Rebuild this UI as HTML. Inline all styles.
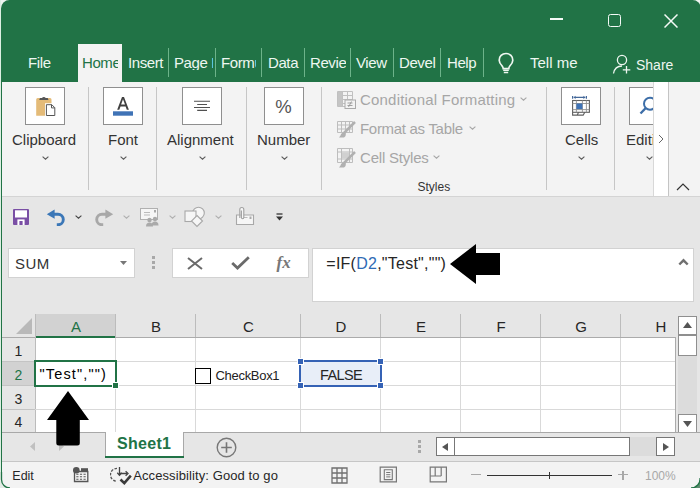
<!DOCTYPE html><html><head><meta charset="utf-8"><style>
html,body{margin:0;padding:0;width:700px;height:488px;overflow:hidden;background:#eef4f0}
body{position:relative;font-family:"Liberation Sans",sans-serif}
div{position:absolute}
.t{white-space:nowrap;line-height:1}
</style></head><body>
<div style="left:1px;top:0px;width:700px;height:82px;background:#217346;border-radius:8.5px 8.5px 0 0"></div>
<div style="left:0px;top:0px;width:1px;height:488px;background:#dcefe2"></div>
<div style="left:550px;top:18.3px;width:13px;height:1.5px;background:#f4faf6"></div>
<div style="left:607.5px;top:13.8px;width:13px;height:13px;border:1.5px solid #f4faf6;border-radius:2.5px;box-sizing:border-box"></div>
<svg style="position:absolute;left:664px;top:13.5px;" width="14" height="14" viewBox="0 0 14 14"><path d="M0.5 0.5L13.5 13.5M13.5 0.5L0.5 13.5" stroke="#f4faf6" stroke-width="1.5"/></svg>
<div style="left:78px;top:44px;width:44px;height:38px;background:#f3f3f3"></div>
<div class="t" style="left:28px;top:54.50px;font-size:15px;letter-spacing:-0.4px;color:#eef7f1;">File</div>
<div class="t" style="left:82px;top:54.50px;font-size:15px;letter-spacing:-0.4px;color:#217346;width:35.5px;overflow:hidden;">Home</div>
<div class="t" style="left:128px;top:54.50px;font-size:15px;letter-spacing:-0.4px;color:#eef7f1;">Insert</div>
<div class="t" style="left:174px;top:54.50px;font-size:15px;letter-spacing:-0.4px;color:#eef7f1;width:38.5px;overflow:hidden;">Page L</div>
<div class="t" style="left:221px;top:54.50px;font-size:15px;letter-spacing:-0.4px;color:#eef7f1;width:35px;overflow:hidden;">Formula</div>
<div class="t" style="left:268px;top:54.50px;font-size:15px;letter-spacing:-0.4px;color:#eef7f1;">Data</div>
<div class="t" style="left:310px;top:54.50px;font-size:15px;letter-spacing:-0.4px;color:#eef7f1;width:35.5px;overflow:hidden;">Review</div>
<div class="t" style="left:356px;top:54.50px;font-size:15px;letter-spacing:-0.4px;color:#eef7f1;">View</div>
<div class="t" style="left:399px;top:54.50px;font-size:15px;letter-spacing:-0.4px;color:#eef7f1;">Devel</div>
<div class="t" style="left:447px;top:54.50px;font-size:15px;letter-spacing:-0.4px;color:#eef7f1;">Help</div>
<div style="left:168px;top:48px;width:1px;height:29px;background:#6db38a"></div>
<div style="left:215px;top:48px;width:1px;height:29px;background:#6db38a"></div>
<div style="left:261px;top:48px;width:1px;height:29px;background:#6db38a"></div>
<div style="left:304px;top:48px;width:1px;height:29px;background:#6db38a"></div>
<div style="left:350px;top:48px;width:1px;height:29px;background:#6db38a"></div>
<div style="left:393px;top:48px;width:1px;height:29px;background:#6db38a"></div>
<div style="left:440px;top:48px;width:1px;height:29px;background:#6db38a"></div>
<div style="left:483px;top:48px;width:1px;height:29px;background:#6db38a"></div>
<svg style="position:absolute;left:497px;top:52px;" width="18" height="22" viewBox="0 0 18 22"><path d="M9 1.5C5 1.5 2.2 4.5 2.2 8.2c0 2.6 1.5 4.2 2.8 5.6.8.9 1.2 1.8 1.2 2.8h5.6c0-1 .4-1.9 1.2-2.8 1.3-1.4 2.8-3 2.8-5.6C15.8 4.5 13 1.5 9 1.5z" fill="none" stroke="#eef7f1" stroke-width="1.7"/><path d="M6.2 18.3h5.6M6.8 20.6h4.4" stroke="#eef7f1" stroke-width="1.5"/></svg>
<div class="t" style="left:530px;top:55.30px;font-size:15px;color:#eef7f1;">Tell me</div>
<svg style="position:absolute;left:612px;top:54px;" width="20" height="20" viewBox="0 0 20 20"><circle cx="10" cy="6" r="4.6" fill="none" stroke="#eef7f1" stroke-width="1.3"/><path d="M1.5 19.5c.8-4.5 4-7.5 8.5-7.5" fill="none" stroke="#eef7f1" stroke-width="1.3"/><path d="M14.5 12v7.5M10.8 15.8h7.5" stroke="#eef7f1" stroke-width="1.3"/></svg>
<div class="t" style="left:636px;top:58.15px;font-size:14px;color:#eef7f1;">Share</div>
<div style="left:1px;top:82px;width:699px;height:114px;background:#f3f3f3"></div>
<div style="left:1px;top:196px;width:699px;height:1px;background:#d4d4d4"></div>
<div style="left:25px;top:87px;width:40px;height:38px;background:#fff;border:1px solid #8f8f8f;box-sizing:border-box"></div>
<div style="left:103px;top:87px;width:40px;height:38px;background:#fff;border:1px solid #8f8f8f;box-sizing:border-box"></div>
<div style="left:182px;top:87px;width:40px;height:38px;background:#fff;border:1px solid #8f8f8f;box-sizing:border-box"></div>
<div style="left:264px;top:87px;width:40px;height:38px;background:#fff;border:1px solid #8f8f8f;box-sizing:border-box"></div>
<div style="left:561px;top:87px;width:40px;height:38px;background:#fff;border:1px solid #8f8f8f;box-sizing:border-box"></div>
<div style="left:629px;top:87px;width:40px;height:38px;background:#fff;border:1px solid #8f8f8f;box-sizing:border-box"></div>
<svg style="position:absolute;left:35px;top:95px;" width="22" height="22" viewBox="0 0 22 22"><path d="M1.2 4.5a1.5 1.5 0 0 1 1.5-1.5h12.3a1.5 1.5 0 0 1 1.5 1.5V20.7H1.2z" fill="#e4bb78"/><path d="M4.2 5h9.3l-0.8-2h-2a2.2 2.2 0 0 0-3.7 0h-2z" fill="#555"/><path d="M10 8.3h7.5l4 4V21.8H10z" fill="#fff"/><path d="M11.4 9.7h5.4l3 3V20.5h-8.4z" fill="#fff" stroke="#555" stroke-width="1"/><path d="M16.5 9.7v3.2h3.2" fill="none" stroke="#555" stroke-width="1"/></svg>
<svg style="position:absolute;left:112px;top:96px;" width="22" height="20" viewBox="0 0 22 20"><path d="M5.2 13.8L10 1H12L16.9 13.8H14.8L13.6 10.4H8.5L7.3 13.8zM9.1 8.6H13L11 3.2z" fill="#404040" fill-rule="evenodd"/><rect x="1" y="15.3" width="20" height="4.4" fill="#3f73b6"/></svg>
<svg style="position:absolute;left:193px;top:100px;" width="18" height="12" viewBox="0 0 18 12"><path d="M1 1.3h16M4.2 4.5h9.8M1 7.5h16M4.2 10.4h9.8" stroke="#505050" stroke-width="1.1"/></svg>
<div class="t" style="left:275.3px;top:97.54px;font-size:18.5px;color:#555;">%</div>
<svg style="position:absolute;left:568px;top:92px;" width="26" height="26" viewBox="0 0 26 26"><path d="M4.6 4v2.8M18.4 4v2.8M5.8 5.4h11.4" stroke="#44699a" stroke-width="1.2"/><path d="M5.6 5.4l2-1.6v3.2zM17.4 5.4l-2-1.6v3.2z" fill="#44699a"/><rect x="4.6" y="8.5" width="16.8" height="11.8" fill="#fff" stroke="#606060" stroke-width="1.1"/><path d="M4.6 11.5h16.8M4.6 17.6h16.8M8.4 8.5v11.8M14.4 8.5v11.8M18.4 8.5v11.8" fill="none" stroke="#909090" stroke-width="0.9"/><rect x="8.4" y="11.5" width="6" height="5.6" fill="#3f73b6"/><path d="M4.6 20.3v2.8h4.6l1.4-2.8M10.6 20.3l-1.4 2.8h6l1.6-2.8" fill="none" stroke="#606060" stroke-width="1.1"/></svg>
<svg style="position:absolute;left:638px;top:95px;" width="16" height="22" viewBox="0 0 16 22"><circle cx="12" cy="8.8" r="6" fill="none" stroke="#3d6ea8" stroke-width="2"/><path d="M7.8 13L2.5 18.5" stroke="#3d6ea8" stroke-width="2.4"/></svg>
<div style="left:88px;top:87px;width:1px;height:103px;background:#c6c6c6"></div>
<div style="left:156px;top:87px;width:1px;height:103px;background:#c6c6c6"></div>
<div style="left:246px;top:87px;width:1px;height:103px;background:#c6c6c6"></div>
<div style="left:321px;top:87px;width:1px;height:103px;background:#c6c6c6"></div>
<div style="left:546px;top:87px;width:1px;height:103px;background:#c6c6c6"></div>
<div style="left:614px;top:87px;width:1px;height:103px;background:#c6c6c6"></div>
<div class="t" style="left:12px;top:132.30px;font-size:15px;color:#333;">Clipboard</div>
<svg style="position:absolute;left:41.5px;top:156px;" width="7" height="4" viewBox="0 0 7 4"><path d="M0.6 0.6L3.5 3.2 6.4 0.6" fill="none" stroke="#5a5a5a" stroke-width="1.1"/></svg>
<div class="t" style="left:108px;top:132.30px;font-size:15px;color:#333;">Font</div>
<svg style="position:absolute;left:119.5px;top:156px;" width="7" height="4" viewBox="0 0 7 4"><path d="M0.6 0.6L3.5 3.2 6.4 0.6" fill="none" stroke="#5a5a5a" stroke-width="1.1"/></svg>
<div class="t" style="left:167px;top:132.30px;font-size:15px;color:#333;">Alignment</div>
<svg style="position:absolute;left:198.5px;top:156px;" width="7" height="4" viewBox="0 0 7 4"><path d="M0.6 0.6L3.5 3.2 6.4 0.6" fill="none" stroke="#5a5a5a" stroke-width="1.1"/></svg>
<div class="t" style="left:257px;top:132.30px;font-size:15px;color:#333;">Number</div>
<svg style="position:absolute;left:280.5px;top:156px;" width="7" height="4" viewBox="0 0 7 4"><path d="M0.6 0.6L3.5 3.2 6.4 0.6" fill="none" stroke="#5a5a5a" stroke-width="1.1"/></svg>
<div class="t" style="left:565px;top:132.30px;font-size:15px;color:#333;">Cells</div>
<svg style="position:absolute;left:577.5px;top:156px;" width="7" height="4" viewBox="0 0 7 4"><path d="M0.6 0.6L3.5 3.2 6.4 0.6" fill="none" stroke="#5a5a5a" stroke-width="1.1"/></svg>
<div class="t" style="left:626px;top:132.30px;font-size:15px;color:#333;width:28px;overflow:hidden">Editing</div>
<svg style="position:absolute;left:645.5px;top:156px;" width="7" height="4" viewBox="0 0 7 4"><path d="M0.6 0.6L3.5 3.2 6.4 0.6" fill="none" stroke="#5a5a5a" stroke-width="1.1"/></svg>
<svg style="position:absolute;left:336px;top:90px;" width="20" height="19" viewBox="0 0 20 19"><path d="M1.5 1.5h15v15h-15zM1.5 5.5h15M1.5 9.5h15M1.5 13.5h15M6.5 1.5v15M11.5 1.5v15" fill="none" stroke="#c0c0c0" stroke-width="1"/><rect x="2" y="2" width="4" height="14" fill="#c4c4c4"/><rect x="9" y="10" width="10.5" height="8.5" fill="#f3f3f3" stroke="#aaa" stroke-width="1"/><path d="M11.5 13h5M11.5 15.5h5M15.5 11.5l-3 5.5" stroke="#999" stroke-width="0.9"/></svg>
<svg style="position:absolute;left:336px;top:120px;" width="20" height="18" viewBox="0 0 20 18"><path d="M1.5 1.5h15v11h-15zM1.5 5h15M1.5 9h15M5.5 1.5v11M9.5 1.5v11M13.5 1.5v11" fill="none" stroke="#bdbdbd" stroke-width="1"/><path d="M19 2L8 13" stroke="#b0b0b0" stroke-width="2.5"/><path d="M9.5 12.5c-2.5-1-4.5 1-5 3l-1.5 2h4c2 0 3.5-2 2.5-5z" fill="#b0b0b0"/></svg>
<svg style="position:absolute;left:336px;top:147px;" width="20" height="21" viewBox="0 0 20 21"><path d="M1.5 1.5h15v14h-15zM1.5 5h15M1.5 12h15M5.5 1.5v14M13.5 1.5v14" fill="none" stroke="#bdbdbd" stroke-width="1"/><rect x="6" y="5.5" width="7" height="6" fill="#d0d0d0"/><path d="M19 5L8 16" stroke="#b0b0b0" stroke-width="2.5"/><path d="M9.5 15.5c-2.5-1-4.5 1-5 3l-1.5 2h4c2 0 3.5-2 2.5-5z" fill="#b0b0b0"/></svg>
<div class="t" style="left:360px;top:92.30px;font-size:15px;color:#a6a6a6;letter-spacing:0.2px">Conditional Formatting</div>
<svg style="position:absolute;left:519.5px;top:97px;" width="7" height="4" viewBox="0 0 7 4"><path d="M0.6 0.6L3.5 3.2 6.4 0.6" fill="none" stroke="#a6a6a6" stroke-width="1.1"/></svg>
<div class="t" style="left:360px;top:121.30px;font-size:15px;color:#a6a6a6;letter-spacing:-0.3px">Format as Table</div>
<svg style="position:absolute;left:469.0px;top:126px;" width="7" height="4" viewBox="0 0 7 4"><path d="M0.6 0.6L3.5 3.2 6.4 0.6" fill="none" stroke="#a6a6a6" stroke-width="1.1"/></svg>
<div class="t" style="left:360px;top:150.30px;font-size:15px;color:#a6a6a6;letter-spacing:-0.2px">Cell Styles</div>
<svg style="position:absolute;left:432.5px;top:155px;" width="7" height="4" viewBox="0 0 7 4"><path d="M0.6 0.6L3.5 3.2 6.4 0.6" fill="none" stroke="#a6a6a6" stroke-width="1.1"/></svg>
<div class="t" style="left:417.5px;top:180.84px;font-size:12px;color:#333;">Styles</div>
<div style="left:653px;top:82px;width:16px;height:114px;background:#fff;border-left:1px solid #d8d8d8;border-right:1px solid #c4c4c4;box-sizing:border-box"></div>
<svg style="position:absolute;left:658px;top:134px;" width="6" height="10" viewBox="0 0 6 10"><path d="M1 1L5 5 1 9" fill="none" stroke="#666" stroke-width="1"/></svg>
<svg style="position:absolute;left:676px;top:183px;" width="14" height="8" viewBox="0 0 14 8"><path d="M1 7L7 1 13 7" fill="none" stroke="#333" stroke-width="1.2"/></svg>
<div style="left:1px;top:197px;width:699px;height:118px;background:#e6e6e6"></div>
<svg style="position:absolute;left:12px;top:208px;" width="18" height="18" viewBox="0 0 18 18"><path d="M1 2a1 1 0 0 1 1-1h14a1 1 0 0 1 1 1v14a1 1 0 0 1-1 1H2a1 1 0 0 1-1-1z" fill="#7a4fa5"/><rect x="3" y="2.3" width="12" height="7.2" fill="#fff"/><path d="M5.4 17V11.4h7.2V17" fill="#fff"/><rect x="7.4" y="13" width="3.2" height="4" fill="#7a4fa5"/></svg>
<svg style="position:absolute;left:46px;top:209px;" width="20" height="17" viewBox="0 0 20 17"><path d="M6 5.2H12A5.3 5.3 0 0 1 12 15.8H10.8" fill="none" stroke="#3b77b7" stroke-width="2.9"/><path d="M0.8 5.2L8.6 0.6V9.8z" fill="#3b77b7"/></svg>
<svg style="position:absolute;left:74.5px;top:214.5px;" width="7" height="4" viewBox="0 0 7 4"><path d="M0.6 0.6L3.5 3.2 6.4 0.6" fill="none" stroke="#444" stroke-width="1.1"/></svg>
<svg style="position:absolute;left:94px;top:209px;" width="20" height="17" viewBox="0 0 20 17"><path d="M14 5.2H8A5.3 5.3 0 0 0 8 15.8H9.2" fill="none" stroke="#a8a8a8" stroke-width="2.9"/><path d="M19.2 5.2L11.4 0.6V9.8z" fill="#a8a8a8"/></svg>
<svg style="position:absolute;left:122.5px;top:214.5px;" width="7" height="4" viewBox="0 0 7 4"><path d="M0.6 0.6L3.5 3.2 6.4 0.6" fill="none" stroke="#b0b0b0" stroke-width="1.1"/></svg>
<svg style="position:absolute;left:139px;top:207px;" width="21" height="20" viewBox="0 0 21 20"><rect x="1.5" y="1.5" width="17" height="11" fill="#f6f6f6" stroke="#b0b0b0" stroke-width="1"/><path d="M5 5.5h6M5 8h6" stroke="#bbb" stroke-width="1"/><rect x="15" y="3" width="2" height="2.5" fill="#aaa"/><circle cx="10.5" cy="13" r="2.2" fill="#aaa"/><circle cx="16" cy="12" r="2.2" fill="#aaa"/><path d="M7 19.5c0-3 1.5-4 3.5-4s3.5 1 3.5 4zM12.5 18.5c0-3 1.5-4 3.5-4s3.5 1 3.5 4z" fill="#aaa"/></svg>
<svg style="position:absolute;left:168.5px;top:214.5px;" width="7" height="4" viewBox="0 0 7 4"><path d="M0.6 0.6L3.5 3.2 6.4 0.6" fill="none" stroke="#b0b0b0" stroke-width="1.1"/></svg>
<svg style="position:absolute;left:183px;top:206px;" width="24" height="22" viewBox="0 0 24 22"><circle cx="15.5" cy="7" r="5.8" fill="#f6f6f6" stroke="#a8a8a8" stroke-width="1.1"/><rect x="2" y="5" width="11" height="10.5" fill="#f6f6f6" stroke="#a8a8a8" stroke-width="1.1"/><path d="M14 9.5l5.5 5.5-5.5 5.5-5.5-5.5z" fill="#f6f6f6" stroke="#a8a8a8" stroke-width="1.1"/></svg>
<svg style="position:absolute;left:214.5px;top:214.5px;" width="7" height="4" viewBox="0 0 7 4"><path d="M0.6 0.6L3.5 3.2 6.4 0.6" fill="none" stroke="#b0b0b0" stroke-width="1.1"/></svg>
<svg style="position:absolute;left:235px;top:206px;" width="21" height="20" viewBox="0 0 21 20"><path d="M1.5 9h17v9.5h-17z" fill="#f6f6f6" stroke="#a8a8a8" stroke-width="1.1"/><path d="M6.5 11.5h6" stroke="#bbb" stroke-width="1"/><rect x="14.5" y="10.5" width="2" height="2.5" fill="#aaa"/><path d="M4.8 12V3.5a2 2 0 0 1 4 0v8a1.2 1.2 0 0 1-2.4 0V4.5" fill="#f6f6f6" stroke="#a0a0a0" stroke-width="1.1"/></svg>
<svg style="position:absolute;left:276px;top:213px;" width="7" height="8" viewBox="0 0 7 8"><path d="M0.5 1h6" stroke="#333" stroke-width="1.3"/><path d="M0 3.5h7L3.5 7.5z" fill="#333"/></svg>
<div style="left:8px;top:248px;width:127px;height:30px;background:#fff;border:1px solid #d2d2d2;box-sizing:border-box"></div>
<div class="t" style="left:15px;top:256.30px;font-size:15px;color:#333;letter-spacing:0.4px">SUM</div>
<svg style="position:absolute;left:119.5px;top:261px;" width="7" height="4" viewBox="0 0 7 4"><path d="M0 0h7L3.5 4z" fill="#777"/></svg>
<div style="left:152px;top:256px;width:3px;height:3px;background:#a8a8a8"></div>
<div style="left:152px;top:261px;width:3px;height:3px;background:#a8a8a8"></div>
<div style="left:152px;top:266px;width:3px;height:3px;background:#a8a8a8"></div>
<div style="left:172px;top:248px;width:137px;height:30px;background:#fff;border:1px solid #d2d2d2;box-sizing:border-box"></div>
<svg style="position:absolute;left:187px;top:257px;" width="16" height="13" viewBox="0 0 16 13"><path d="M1 1L15 12M15 1L1 12" stroke="#6a6a6a" stroke-width="2"/></svg>
<svg style="position:absolute;left:231px;top:256px;" width="19" height="14" viewBox="0 0 19 14"><path d="M1.2 7L6.5 12 17.8 1.2" fill="none" stroke="#6a6a6a" stroke-width="2.8"/></svg>
<div class="t" style="left:276.5px;top:254.11px;font-size:17px;color:#777;font-family:'Liberation Serif',serif"><i><b>fx</b></i></div>
<div style="left:312px;top:248px;width:382px;height:54px;background:#fff;border:1px solid #d2d2d2;box-sizing:border-box"></div>
<div class="t" style="left:326.3px;top:256.46px;font-size:16px;color:#262626;letter-spacing:0.25px">=IF(<span style="color:#2f6bb5">D2</span>,"Test","")</div>
<svg style="position:absolute;left:678px;top:257.5px;" width="11" height="8" viewBox="0 0 11 8"><path d="M1.3 6.5L5.5 2.3 9.7 6.5" fill="none" stroke="#707070" stroke-width="2.4"/></svg>
<svg style="position:absolute;left:450px;top:244px;" width="51" height="40" viewBox="0 0 51 40"><path d="M0 20L26 0V9H50V31H26V40z" fill="#000"/></svg>
<div style="left:2px;top:314px;width:674px;height:118px;background:#fff"></div>
<div style="left:2px;top:314px;width:674px;height:23px;background:#e6e6e6"></div>
<div style="left:2px;top:314px;width:33px;height:118px;background:#e6e6e6"></div>
<div style="left:36px;top:314px;width:79px;height:23px;background:#d2d2d2"></div>
<div style="left:36px;top:336px;width:79px;height:2px;background:#217346"></div>
<div style="left:2px;top:362px;width:33px;height:23px;background:#d2d2d2"></div>
<svg style="position:absolute;left:16px;top:318px;" width="16" height="16" viewBox="0 0 16 16"><path d="M16 0V16H0z" fill="#b9b9b9"/></svg>
<div class="t" style="left:36px;width:80px;text-align:center;top:318.80px;font-size:15px;color:#217346">A</div>
<div style="left:115px;top:314px;width:1px;height:23px;background:#bcbcbc"></div>
<div class="t" style="left:116px;width:80px;text-align:center;top:318.80px;font-size:15px;color:#262626">B</div>
<div style="left:195px;top:314px;width:1px;height:23px;background:#bcbcbc"></div>
<div class="t" style="left:196px;width:105px;text-align:center;top:318.80px;font-size:15px;color:#262626">C</div>
<div style="left:300px;top:314px;width:1px;height:23px;background:#bcbcbc"></div>
<div class="t" style="left:301px;width:80px;text-align:center;top:318.80px;font-size:15px;color:#262626">D</div>
<div style="left:380px;top:314px;width:1px;height:23px;background:#bcbcbc"></div>
<div class="t" style="left:381px;width:80px;text-align:center;top:318.80px;font-size:15px;color:#262626">E</div>
<div style="left:460px;top:314px;width:1px;height:23px;background:#bcbcbc"></div>
<div class="t" style="left:461px;width:80px;text-align:center;top:318.80px;font-size:15px;color:#262626">F</div>
<div style="left:540px;top:314px;width:1px;height:23px;background:#bcbcbc"></div>
<div class="t" style="left:541px;width:80px;text-align:center;top:318.80px;font-size:15px;color:#262626">G</div>
<div style="left:620px;top:314px;width:1px;height:23px;background:#bcbcbc"></div>
<div class="t" style="left:621px;width:80px;text-align:center;top:318.80px;font-size:15px;color:#262626">H</div>
<div style="left:2px;top:337px;width:674px;height:1px;background:#ababab"></div>
<div style="left:36px;top:336px;width:79px;height:2px;background:#217346"></div>
<div style="left:35px;top:314px;width:1px;height:118px;background:#bcbcbc"></div>
<div style="left:2px;top:361px;width:674px;height:1px;background:#d9d9d9"></div>
<div class="t" style="left:2px;width:33px;text-align:center;top:343.65px;font-size:14px;color:#262626">1</div>
<div style="left:2px;top:385px;width:674px;height:1px;background:#d9d9d9"></div>
<div class="t" style="left:2px;width:33px;text-align:center;top:367.65px;font-size:14px;color:#217346">2</div>
<div style="left:2px;top:409px;width:674px;height:1px;background:#d9d9d9"></div>
<div class="t" style="left:2px;width:33px;text-align:center;top:391.65px;font-size:14px;color:#262626">3</div>
<div class="t" style="left:2px;width:33px;text-align:center;top:414.65px;font-size:14px;color:#262626">4</div>
<div style="left:2px;top:361px;width:33px;height:1px;background:#c4c4c4"></div>
<div style="left:2px;top:385px;width:33px;height:1px;background:#c4c4c4"></div>
<div style="left:2px;top:409px;width:33px;height:1px;background:#c4c4c4"></div>
<div style="left:115px;top:338px;width:1px;height:94px;background:#d9d9d9"></div>
<div style="left:195px;top:338px;width:1px;height:94px;background:#d9d9d9"></div>
<div style="left:300px;top:338px;width:1px;height:94px;background:#d9d9d9"></div>
<div style="left:380px;top:338px;width:1px;height:94px;background:#d9d9d9"></div>
<div style="left:460px;top:338px;width:1px;height:94px;background:#d9d9d9"></div>
<div style="left:540px;top:338px;width:1px;height:94px;background:#d9d9d9"></div>
<div style="left:620px;top:338px;width:1px;height:94px;background:#d9d9d9"></div>
<div style="left:675px;top:338px;width:1px;height:94px;background:#ababab"></div>
<div style="left:34px;top:360px;width:83px;height:27px;border:2px solid #217346;box-sizing:border-box"></div>
<div style="left:112px;top:382px;width:7px;height:7px;background:#fff"></div>
<div style="left:113px;top:383px;width:5px;height:5px;background:#217346"></div>
<div class="t" style="left:39.5px;top:367.23px;font-size:14.5px;color:#000;letter-spacing:1.15px">"Test","")</div>
<div style="left:195px;top:368px;width:16px;height:16px;border:1px solid #000;box-sizing:border-box;background:#fff"></div>
<div class="t" style="left:215.5px;top:369.00px;font-size:13px;color:#222;letter-spacing:-0.3px">CheckBox1</div>
<div style="left:299px;top:360px;width:83px;height:27px;background:#e8eef8;border:2px solid #3562b5;box-sizing:border-box"></div>
<div style="left:297px;top:358px;width:7px;height:7px;background:#fff"></div>
<div style="left:298px;top:359px;width:5px;height:5px;background:#3562b5"></div>
<div style="left:377px;top:358px;width:7px;height:7px;background:#fff"></div>
<div style="left:378px;top:359px;width:5px;height:5px;background:#3562b5"></div>
<div style="left:297px;top:382px;width:7px;height:7px;background:#fff"></div>
<div style="left:298px;top:383px;width:5px;height:5px;background:#3562b5"></div>
<div style="left:377px;top:382px;width:7px;height:7px;background:#fff"></div>
<div style="left:378px;top:383px;width:5px;height:5px;background:#3562b5"></div>
<div class="t" style="left:320px;top:367.73px;font-size:14.5px;color:#262626;letter-spacing:-0.6px">FALSE</div>
<div style="left:676px;top:314px;width:24px;height:118px;background:#e6e6e6"></div>
<div style="left:678px;top:316px;width:19px;height:19px;background:#fff;border:1px solid #8f8f8f;box-sizing:border-box"></div>
<svg style="position:absolute;left:683px;top:322px;" width="9" height="6" viewBox="0 0 9 6"><path d="M0 6L4.5 0 9 6z" fill="#555"/></svg>
<div style="left:678px;top:335px;width:19px;height:21px;background:#fff;border:1px solid #8f8f8f;box-sizing:border-box"></div>
<div style="left:678px;top:356px;width:19px;height:58px;background:#dcdcdc"></div>
<div style="left:678px;top:414px;width:19px;height:19px;background:#fff;border:1px solid #8f8f8f;box-sizing:border-box"></div>
<svg style="position:absolute;left:683px;top:421px;" width="9" height="6" viewBox="0 0 9 6"><path d="M0 0L4.5 6 9 0z" fill="#555"/></svg>
<div style="left:2px;top:432px;width:698px;height:29px;background:#e6e6e6"></div>
<div style="left:2px;top:432px;width:698px;height:1px;background:#a8a8a8"></div>
<div style="left:105px;top:432px;width:79px;height:24px;background:#fff;border-left:1px solid #a8a8a8;border-right:1px solid #a8a8a8;box-sizing:border-box"></div>
<div style="left:105px;top:455.5px;width:79px;height:2px;background:#217346"></div>
<div class="t" style="left:117px;top:435.96px;font-size:16px;color:#217346;letter-spacing:0.3px"><b>Sheet1</b></div>
<svg style="position:absolute;left:216px;top:437px;" width="21" height="21" viewBox="0 0 21 21"><circle cx="10.5" cy="10.5" r="9.3" fill="none" stroke="#777" stroke-width="1.4"/><path d="M10.5 5.2v10.6M5.2 10.5h10.6" stroke="#777" stroke-width="1.6"/></svg>
<svg style="position:absolute;left:30px;top:442px;" width="5" height="9" viewBox="0 0 5 9"><path d="M5 0V9L0 4.5z" fill="#c0c0c0"/></svg>
<svg style="position:absolute;left:59px;top:442px;" width="5" height="9" viewBox="0 0 5 9"><path d="M0 0V9L5 4.5z" fill="#c0c0c0"/></svg>
<div style="left:418px;top:440px;width:3px;height:3px;background:#a8a8a8"></div>
<div style="left:418px;top:445px;width:3px;height:3px;background:#a8a8a8"></div>
<div style="left:418px;top:450px;width:3px;height:3px;background:#a8a8a8"></div>
<div style="left:436px;top:437px;width:239px;height:19px;background:#dcdcdc"></div>
<div style="left:436px;top:437px;width:19px;height:19px;background:#fff;border:1.5px solid #777;box-sizing:border-box"></div>
<svg style="position:absolute;left:441.5px;top:443px;" width="6" height="8" viewBox="0 0 6 8"><path d="M6 0V8L0 4z" fill="#555"/></svg>
<div style="left:454px;top:437px;width:176px;height:19px;background:#fff;border:1.5px solid #777;box-sizing:border-box"></div>
<div style="left:656px;top:437px;width:19px;height:19px;background:#fff;border:1.5px solid #777;box-sizing:border-box"></div>
<svg style="position:absolute;left:663px;top:443px;" width="6" height="8" viewBox="0 0 6 8"><path d="M0 0V8L6 4z" fill="#555"/></svg>
<svg style="position:absolute;left:47px;top:391px;" width="43" height="55" viewBox="0 0 43 55"><path d="M21 0L42 29H32.8V52a2.5 2.5 0 0 1-2.5 2.5H11.8a2.5 2.5 0 0 1-2.5-2.5V29H0z" fill="#000"/></svg>
<div style="left:2px;top:461px;width:698px;height:27px;background:#f3f3f3"></div>
<div style="left:2px;top:461px;width:698px;height:1px;background:#c6c6c6"></div>
<div class="t" style="left:12.3px;top:469.92px;font-size:12.5px;color:#262626;">Edit</div>
<svg style="position:absolute;left:72px;top:466px;" width="17" height="17" viewBox="0 0 17 17"><rect x="9" y="2.2" width="7" height="3.3" fill="#555"/><path d="M2.5 5.5h13.3v10H2.5z" fill="none" stroke="#555" stroke-width="1.3"/><path d="M4.3 8.3h2.2M7.9 8.3h2.2M11.5 8.3h2.2M4.3 10.8h2.2M7.9 10.8h2.2M11.5 10.8h2.2M4.3 13.2h2.2M7.9 13.2h2.2M11.5 13.2h2.2" stroke="#555" stroke-width="1.1"/><circle cx="4.3" cy="4.3" r="3.3" fill="#555"/></svg>
<svg style="position:absolute;left:110px;top:465px;" width="22" height="20" viewBox="0 0 22 20"><path d="M7 3.3A6.5 6.5 0 0 0 7 16.3" fill="none" stroke="#555" stroke-width="1.3" stroke-dasharray="2.6 1.4"/><path d="M9.5 2v8.2M9.5 8.5h8" fill="none" stroke="#444" stroke-width="1.3"/><path d="M7.3 7.8l2.2 2.4 2.2-2.4M15.6 6.3l2.4 2.2-2.4 2.2" fill="none" stroke="#444" stroke-width="1.3"/><path d="M10.5 14.5l3.8 3.6 6.5-7.5" fill="none" stroke="#3a3a3a" stroke-width="2.6"/></svg>
<div class="t" style="left:133.2px;top:469.00px;font-size:13px;color:#262626;letter-spacing:0.1px">Accessibility: Good to go</div>
<svg style="position:absolute;left:331px;top:467px;" width="17" height="17" viewBox="0 0 17 17"><path d="M1 1h15v15H1zM6 1v15M11 1v15M1 6h15M1 11h15" fill="none" stroke="#707070" stroke-width="1.3"/></svg>
<svg style="position:absolute;left:379px;top:466px;" width="19" height="17" viewBox="0 0 19 17"><path d="M1.2 1.2h16.2v14.6H1.2z" fill="none" stroke="#777" stroke-width="1.2"/><path d="M5.3 3.8h8v9.8h-8z" fill="none" stroke="#777" stroke-width="1.1"/><path d="M7.2 6.5h4.2M7.2 8.7h4.2M7.2 10.9h4.2" stroke="#777" stroke-width="1"/></svg>
<svg style="position:absolute;left:429px;top:466px;" width="19" height="17" viewBox="0 0 19 17"><path d="M1.2 1.2h16.2v14.6H1.2z" fill="none" stroke="#777" stroke-width="1.2"/><path d="M1.2 10h11M6.2 1.2v8.8M12.2 1.2v8.8" fill="none" stroke="#777" stroke-width="1.2"/></svg>
<div class="t" style="left:645px;top:469.54px;font-size:12px;color:#a8a8a8;">100%</div>
<div style="left:487px;top:474.5px;width:125px;height:1.3px;background:#333"></div>
<div style="left:548.6px;top:471.5px;width:1.5px;height:7.5px;background:#333"></div>
<div style="left:470.5px;top:474.3px;width:10.5px;height:1.2px;background:#a8a8a8"></div>
<div style="left:618px;top:474.3px;width:10px;height:1.2px;background:#a8a8a8"></div>
<div style="left:622.4px;top:470.5px;width:1.2px;height:9px;background:#a8a8a8"></div>
<div style="left:1px;top:82px;width:1px;height:398px;background:#217346"></div>
<svg style="position:absolute;left:0px;top:472px;" width="12" height="16" viewBox="0 0 12 16"><path d="M0 0V16H10A8.5 8.5 0 0 1 1.5 7.5V0z" fill="#e4ece6"/><path d="M1.5 0V7.5A8.5 8.5 0 0 0 10 16" fill="none" stroke="#217346" stroke-width="1.3"/></svg>
<svg style="position:absolute;left:686px;top:474px;" width="14" height="14" viewBox="0 0 14 14"><path d="M14 4V14H5A9 9 0 0 0 14 4z" fill="#5e8c70"/><path d="M14 4A9 9 0 0 1 5 14" fill="none" stroke="#217346" stroke-width="1.3"/></svg>
</body></html>
